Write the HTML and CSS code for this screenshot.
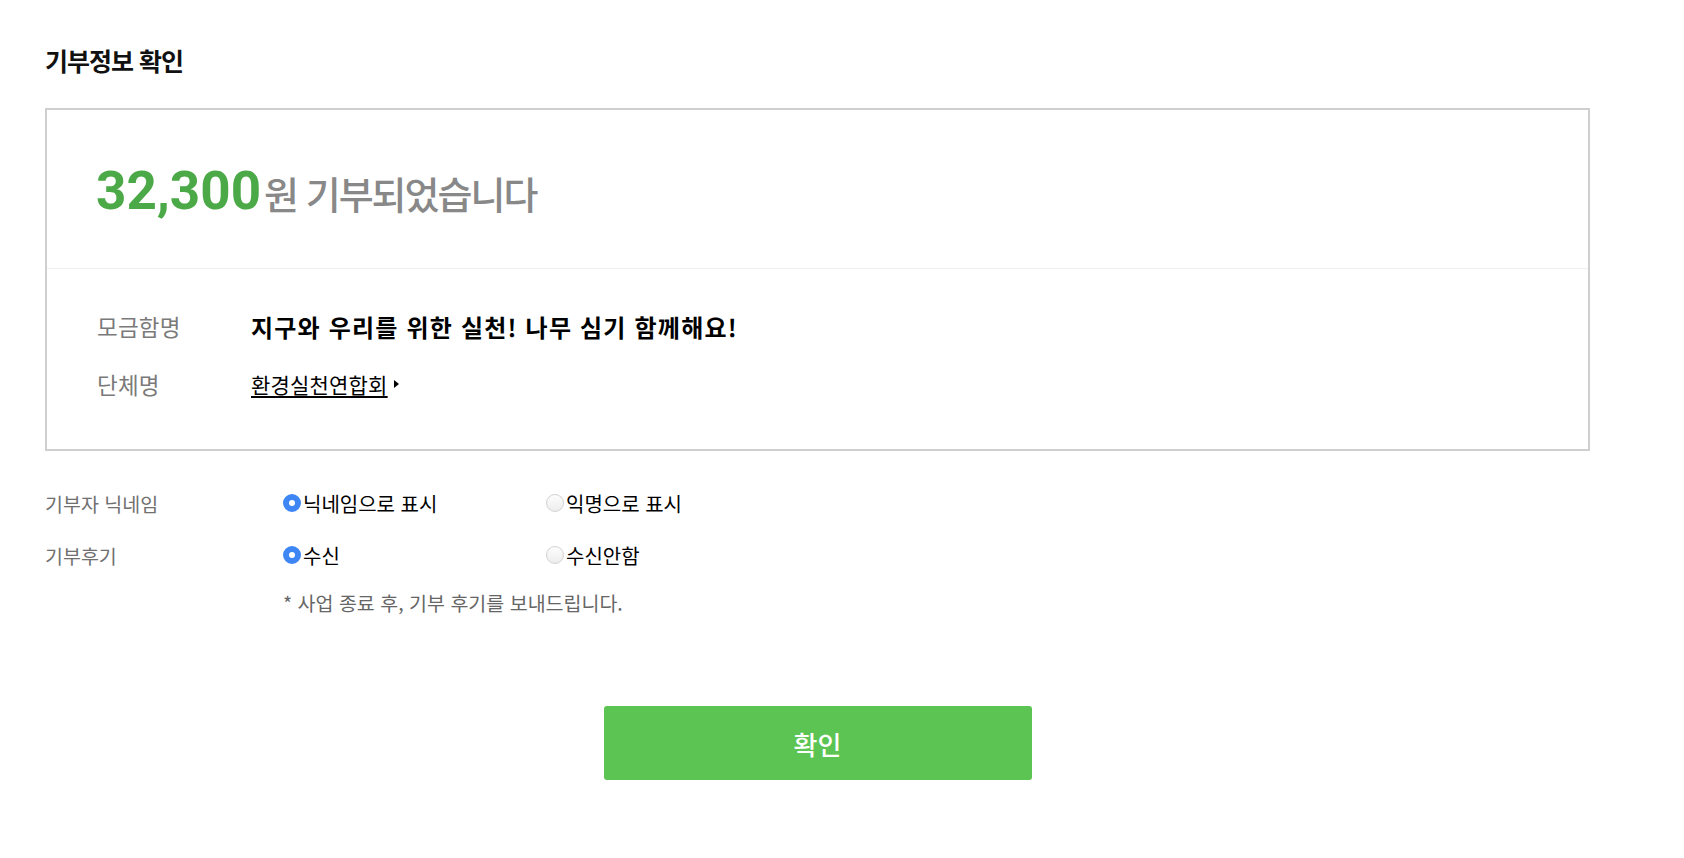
FILE: index.html
```html
<!DOCTYPE html>
<html lang="ko">
<head>
<meta charset="utf-8">
<title>기부정보 확인</title>
<link rel="stylesheet" href="styles.css">
</head>
<body>
<main class="page">
  <h1 class="title">기부정보 확인</h1>
  <section class="summary">
    <div class="summary-head">
      <p class="result"><span class="amount">32,300</span><span class="result-text">원 기부되었습니다</span></p>
    </div>
    <div class="summary-body">
      <div class="info-row">
        <span class="info-label">모금함명</span>
        <span class="info-value">지구와 우리를 위한 실천! 나무 심기 함께해요!</span>
      </div>
      <div class="info-row second">
        <span class="info-label">단체명</span>
        <a class="org-link" href="#">환경실천연합회</a><span class="arrow"></span>
      </div>
    </div>
  </section>

  <section class="options">
    <div class="opt-row">
      <span class="opt-label">기부자 닉네임</span>
      <label class="radio"><span class="dot checked"></span>닉네임으로 표시</label>
      <label class="radio"><span class="dot"></span>익명으로 표시</label>
    </div>
    <div class="opt-row second">
      <span class="opt-label">기부후기</span>
      <label class="radio"><span class="dot checked"></span>수신</label>
      <label class="radio"><span class="dot"></span>수신안함</label>
    </div>
    <p class="note">* 사업 종료 후, 기부 후기를 보내드립니다.</p>
  </section>

  <div class="actions">
    <button class="confirm" type="button">확인</button>
  </div>
</main>
</body>
</html>
```

FILE: styles.css
```css
* { box-sizing: border-box; }
html, body { margin: 0; padding: 0; background: #fff; }
body {
  font-family: "Noto Sans CJK KR", "Noto Sans", sans-serif;
  color: #000;
}
.page {
  width: 1545px;
  margin-left: 45px;
  padding-top: 45px;
}
.title {
  margin: 0 0 33px;
  font-size: 25px;
  line-height: 30px;
  font-weight: 700;
  letter-spacing: -1px;
  color: #111;
}
.summary {
  border: 2px solid #cfcfcf;
}
.summary-head {
  height: 159px;
  display: flex;
  align-items: center;
  padding: 5px 0 0 49px;
  border-bottom: 1px solid #efefef;
}
.result {
  margin: 0;
  display: flex;
  align-items: baseline;
  line-height: 1;
}
.amount {
  font-family: Roboto, "Liberation Sans", sans-serif;
  font-weight: 700;
  font-size: 53px;
  color: #4ca948;
}
.result-text {
  font-size: 38px;
  font-weight: 500;
  letter-spacing: -2px;
  color: #888;
  margin-left: 3px;
}
.summary-body {
  padding: 42px 0 50px 50px;
}
.info-row {
  display: flex;
  align-items: center;
  height: 30px;
}
.info-row.second { margin-top: 28px; }
.info-label {
  width: 154px;
  flex: none;
  font-size: 22.5px;
  letter-spacing: 0.2px;
  color: #7a7a7a;
}
.info-value {
  font-size: 24px;
  font-weight: 700;
  letter-spacing: 1.2px;
  color: #000;
}
.org-link {
  font-size: 21px;
  letter-spacing: 0.2px;
  color: #000;
  text-decoration: underline;
  text-underline-offset: 3px;
}
.arrow {
  width: 0;
  height: 0;
  margin-left: 6px;
  border-top: 4px solid transparent;
  border-bottom: 4px solid transparent;
  border-left: 5px solid #000;
}
.options {
  margin-top: 37px;
}
.opt-row {
  display: flex;
  align-items: center;
  height: 30px;
}
.opt-row.second { margin-top: 22px; }
.opt-label {
  width: 238px;
  flex: none;
  font-size: 19.5px;
  color: #707070;
}
.radio {
  width: 263px;
  flex: none;
  display: flex;
  align-items: center;
  gap: 2px;
  font-size: 20px;
  color: #000;
}
.dot {
  width: 18px;
  height: 18px;
  border-radius: 50%;
  border: 1px solid #d2d2d2;
  background: linear-gradient(#fdfdfd, #ededed);
  flex: none;
}
.dot.checked {
  border: 6px solid #3d86f4;
  background: #fff;
}
.note {
  margin: 18px 0 0 238px;
  font-size: 19.5px;
  line-height: 30px;
  color: #666;
}
.actions {
  display: flex;
  justify-content: center;
  margin-top: 88px;
}
.confirm {
  width: 428px;
  height: 74px;
  border: 0;
  border-radius: 3px;
  background: #5cc452;
  color: #fff;
  font-family: "Noto Sans CJK KR", "Noto Sans", sans-serif;
  font-size: 26px;
  font-weight: 500;
  cursor: pointer;
}
```
